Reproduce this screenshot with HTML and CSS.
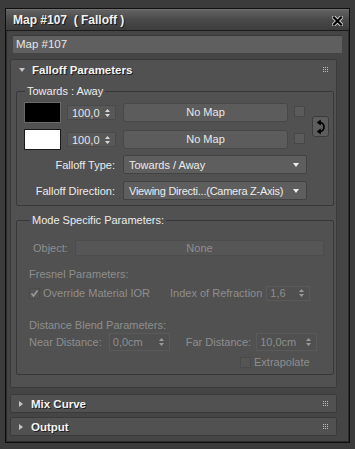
FILE: index.html
```html
<!DOCTYPE html>
<html lang="en">
<head>
    <meta charset="UTF-8">
    <meta name="viewport" content="width=device-width, initial-scale=1.0">
    <title>Map #107 ( Falloff )</title>
    <link rel="stylesheet" href="styles.css">
</head>
<body>
  <div class="window">
    <div class="titlebar">
      <span class="title">Map #107&nbsp; ( Falloff )</span>
      <svg class="close" width="11" height="10" viewBox="0 0 11 10">
        <path d="M2 1.5 L9 8.5 M9 1.5 L2 8.5" stroke="#cfcfcf" stroke-width="4" stroke-linecap="square"/>
        <path d="M2 1.5 L9 8.5 M9 1.5 L2 8.5" stroke="#000" stroke-width="2.2" stroke-linecap="square"/>
      </svg>
    </div>

    <div class="content">
      <div class="name-field">Map #107</div>

      <div class="rollouts">
        <!-- Falloff Parameters -->
        <div class="rollout">
          <div class="rollout-head">
            <span class="arrow-down"></span>
            <span class="rollout-title">Falloff Parameters</span>
            <svg class="grip" width="5" height="5" viewBox="0 0 5 5" fill="#bdbdbd">
              <rect x="0" y="0" width="1" height="1"/><rect x="2" y="0" width="1" height="1"/><rect x="4" y="0" width="1" height="1"/>
              <rect x="0" y="2" width="1" height="1"/><rect x="2" y="2" width="1" height="1"/><rect x="4" y="2" width="1" height="1"/>
              <rect x="0" y="4" width="1" height="1"/><rect x="2" y="4" width="1" height="1"/><rect x="4" y="4" width="1" height="1"/>
            </svg>
          </div>

          <div class="rollout-body">
            <fieldset class="group group-maps">
              <legend>Towards : Away</legend>

              <div class="map-block">
                <div class="map-list">
                  <div class="map-row">
                    <div class="swatch swatch-black"></div>
                    <div class="spinner spinner-pct">
                      <span>100,0</span>
                      <svg width="5" height="8" viewBox="0 0 5 8" fill="#d8d8d8"><path d="M0 3 L2.5 0 L5 3Z M0 5 L2.5 8 L5 5Z"/></svg>
                    </div>
                    <div class="map-button">No Map</div>
                    <div class="check-small"></div>
                  </div>
                  <div class="map-row">
                    <div class="swatch swatch-white"></div>
                    <div class="spinner spinner-pct">
                      <span>100,0</span>
                      <svg width="5" height="8" viewBox="0 0 5 8" fill="#d8d8d8"><path d="M0 3 L2.5 0 L5 3Z M0 5 L2.5 8 L5 5Z"/></svg>
                    </div>
                    <div class="map-button">No Map</div>
                    <div class="check-small"></div>
                  </div>
                </div>
                <div class="swap">
                  <svg width="10" height="16" viewBox="0 0 10 16" fill="none" stroke="#000" stroke-width="1.6">
                    <path d="M3 3.5 Q8 3.5 8 8 Q8 12.5 3 12.5"/>
                    <path d="M1 3.5 L4.5 1 L4.5 6Z M1 12.5 L4.5 10 L4.5 15Z" fill="#000" stroke-width="0.6"/>
                  </svg>
                </div>
              </div>

              <div class="field-row first">
                <label class="field-label">Falloff Type:</label>
                <div class="dropdown">
                  <span>Towards / Away</span>
                  <span class="drop-arrow"></span>
                </div>
              </div>
              <div class="field-row">
                <label class="field-label">Falloff Direction:</label>
                <div class="dropdown">
                  <span class="tight">Viewing Directi...(Camera Z-Axis)</span>
                  <span class="drop-arrow"></span>
                </div>
              </div>
            </fieldset>

            <fieldset class="group group-mode">
              <legend>Mode Specific Parameters:</legend>

              <div class="object-row">
                <span class="dim object-label">Object:</span>
                <div class="none-button">None</div>
              </div>

              <div class="dim sub-title fresnel">Fresnel Parameters:</div>
              <div class="ior-row">
                <div class="check-label">
                  <span class="checkbox">
                    <svg width="9" height="9" viewBox="0 0 9 9" fill="none" stroke="#9a9a9a" stroke-width="1.6"><path d="M1.5 4.5 L3.5 7 L7.5 1.5"/></svg>
                  </span>
                  <span class="dim">Override Material IOR</span>
                </div>
                <span class="dim">Index of Refraction</span>
                <div class="spinner spinner-ior dim">
                  <span>1,6</span>
                  <svg width="5" height="8" viewBox="0 0 5 8" fill="#9a9a9a"><path d="M0 3 L2.5 0 L5 3Z M0 5 L2.5 8 L5 5Z"/></svg>
                </div>
              </div>

              <div class="dim sub-title distance">Distance Blend Parameters:</div>
              <div class="distance-row">
                <span class="dim">Near Distance:</span>
                <div class="spinner spinner-dist near dim">
                  <span>0,0cm</span>
                  <svg width="5" height="8" viewBox="0 0 5 8" fill="#9a9a9a"><path d="M0 3 L2.5 0 L5 3Z M0 5 L2.5 8 L5 5Z"/></svg>
                </div>
                <span class="dim far-label">Far Distance:</span>
                <div class="spinner spinner-dist far dim">
                  <span>10,0cm</span>
                  <svg width="5" height="8" viewBox="0 0 5 8" fill="#9a9a9a"><path d="M0 3 L2.5 0 L5 3Z M0 5 L2.5 8 L5 5Z"/></svg>
                </div>
              </div>
              <div class="extrapolate-row">
                <span class="checkbox"></span>
                <span class="dim">Extrapolate</span>
              </div>
            </fieldset>
          </div>
        </div>

        <!-- collapsed rollouts -->
        <div class="rollout closed mix">
          <div class="rollout-head">
            <span class="arrow-right"></span>
            <span class="rollout-title">Mix Curve</span>
            <svg class="grip" width="5" height="5" viewBox="0 0 5 5" fill="#bdbdbd">
              <rect x="0" y="0" width="1" height="1"/><rect x="2" y="0" width="1" height="1"/><rect x="4" y="0" width="1" height="1"/>
              <rect x="0" y="2" width="1" height="1"/><rect x="2" y="2" width="1" height="1"/><rect x="4" y="2" width="1" height="1"/>
              <rect x="0" y="4" width="1" height="1"/><rect x="2" y="4" width="1" height="1"/><rect x="4" y="4" width="1" height="1"/>
            </svg>
          </div>
        </div>
        <div class="rollout closed output">
          <div class="rollout-head">
            <span class="arrow-right"></span>
            <span class="rollout-title">Output</span>
            <svg class="grip" width="5" height="5" viewBox="0 0 5 5" fill="#bdbdbd">
              <rect x="0" y="0" width="1" height="1"/><rect x="2" y="0" width="1" height="1"/><rect x="4" y="0" width="1" height="1"/>
              <rect x="0" y="2" width="1" height="1"/><rect x="2" y="2" width="1" height="1"/><rect x="4" y="2" width="1" height="1"/>
              <rect x="0" y="4" width="1" height="1"/><rect x="2" y="4" width="1" height="1"/><rect x="4" y="4" width="1" height="1"/>
            </svg>
          </div>
        </div>
      </div>
    </div>
  </div>
</body>
</html>
```

FILE: styles.css
```css
body {
    margin: 0;
    padding: 0;
    background-color: #3b3b3b;
    font-family: "Liberation Sans", Arial, sans-serif;
    font-size: 11px;
    color: #e6e6e6;
}

.window {
    box-sizing: border-box;
    width: 345px;
    height: 435px;
    margin: 8px 0 0 5px;
    border: 1px solid #0e0e0e;
    box-shadow: inset 0 0 0 1px #2c2c2c;
    background-color: #454545;
    display: flex;
    flex-direction: column;
}

/* title bar */
.titlebar {
    height: 20px;
    flex: none;
    display: flex;
    align-items: center;
    justify-content: space-between;
    padding: 0 6px 0 7px;
    background: linear-gradient(#626262, #4b4b4b 45%, #3c3c3c);
    border-top: 1px solid #707070;
    border-bottom: 1px solid #1c1c1c;
}

.title {
    font-size: 12px;
    font-weight: bold;
    color: #f2f2f2;
    text-shadow: 1px 1px 0 #1a1a1a;
}

.close {
    display: block;
    margin-top: 1px;
}

.content {
    flex: 1;
    padding-top: 4px;
}

.name-field {
    box-sizing: border-box;
    height: 18px;
    margin: 0 7px 0 7px;
    padding: 2px 3px;
    background-color: #5f5f5f;
    border-top: 1px solid #393939;
    color: #e6e6e6;
    font-size: 11.5px;
}

/* rollouts */
.rollouts {
    margin: 6px 0 0 4px;
    width: 327px;
}

.rollout {
    box-sizing: border-box;
    background-color: #515151;
    border: 1px solid #3a3a3a;
    border-radius: 2px;
}

.rollout.closed {
    height: 19px;
}

.rollout.mix {
    margin-top: 6px;
}

.rollout.output {
    margin-top: 4px;
}

.rollout-head {
    height: 19px;
    display: flex;
    align-items: center;
    padding: 0 8px 0 6px;
}

.rollout.closed .rollout-head {
    height: 17px;
}

.rollout-title {
    flex: 1;
    font-size: 11.5px;
    font-weight: bold;
    color: #f4f4f4;
    text-shadow: 1px 1px 0 #1e1e1e;
}

.arrow-down {
    width: 0;
    height: 0;
    margin: 1px 7px 0 2px;
    border-left: 3px solid transparent;
    border-right: 3px solid transparent;
    border-top: 4px solid #c4c4c4;
}

.arrow-right {
    width: 0;
    height: 0;
    margin: 0 8px 0 2px;
    border-top: 3px solid transparent;
    border-bottom: 3px solid transparent;
    border-left: 4px solid #c4c4c4;
}

.grip {
    display: block;
}

.rollout-body {
    padding: 0 2px 12px 5px;
}

/* group boxes */
.group {
    margin: 6px 0 0 0;
    border: 1px solid #383838;
    border-radius: 2px;
    min-width: 0;
}

.group legend {
    padding: 0 2px;
    margin-left: 1px;
    line-height: 13px;
    color: #ececec;
}

.group-maps {
    padding: 4px 4px 5px 7px;
}

.group-mode {
    margin-top: 8px;
    padding: 0 4px 5px 12px;
}

.map-block {
    display: flex;
    align-items: center;
}

.map-list {
    display: flex;
    flex-direction: column;
    gap: 6px;
}

.map-row {
    display: flex;
    align-items: center;
    height: 21px;
}

.swatch {
    box-sizing: border-box;
    width: 37px;
    height: 21px;
    margin-right: 6px;
}

.swatch-black {
    background-color: #000;
    border: 1px solid #6a6a6a;
}

.swatch-white {
    background-color: #fff;
    border: 1px solid #1a1a1a;
}

.spinner {
    box-sizing: border-box;
    display: flex;
    align-items: center;
    justify-content: space-between;
    background-color: #585858;
    border: 1px solid #4a4a4a;
    padding: 0 5px 0 3px;
}

.spinner svg {
    display: block;
}

.spinner-pct {
    width: 49px;
    height: 15px;
    margin-right: 7px;
    padding-left: 4px;
}

.map-button {
    box-sizing: border-box;
    width: 165px;
    height: 19px;
    line-height: 17px;
    text-align: center;
    background-color: #5c5c5c;
    border: 1px solid #484848;
    border-radius: 3px;
    color: #e8e8e8;
}

.check-small {
    box-sizing: border-box;
    width: 11px;
    height: 11px;
    margin-left: 6px;
    background-color: #5b5b5b;
    border: 1px solid #474747;
    align-self: flex-start;
    margin-top: 4px;
}

.swap {
    box-sizing: border-box;
    width: 17px;
    height: 21px;
    margin-left: 7px;
    margin-top: 1px;
    display: flex;
    align-items: center;
    justify-content: center;
    background-color: #5d5d5d;
    border: 1px solid #3c3c3c;
    border-radius: 3px;
}

.swap svg {
    display: block;
}

.field-row {
    display: flex;
    align-items: center;
    height: 19px;
    margin-top: 7px;
}

.field-row.first {
    margin-top: 5px;
}

.field-label {
    width: 91px;
    margin-right: 8px;
    text-align: right;
    color: #ececec;
}

.dropdown {
    box-sizing: border-box;
    width: 184px;
    height: 19px;
    display: flex;
    align-items: center;
    justify-content: space-between;
    padding: 0 7px 0 5px;
    background-color: #5e5e5e;
    border: 1px solid #424242;
    border-radius: 2px;
    color: #ececec;
}

.dropdown .tight {
    letter-spacing: -0.25px;
}

.drop-arrow {
    width: 0;
    height: 0;
    border-left: 3px solid transparent;
    border-right: 3px solid transparent;
    border-top: 4px solid #eeeeee;
}

/* disabled section */
.dim {
    color: #8e8e8e;
}

.object-row {
    display: flex;
    align-items: center;
    height: 16px;
    margin-top: 13px;
    padding-left: 4px;
}

.object-label {
    width: 42px;
}

.none-button {
    box-sizing: border-box;
    width: 249px;
    height: 16px;
    line-height: 14px;
    text-align: center;
    background-color: #565656;
    border: 1px solid #4c4c4c;
    border-radius: 2px;
    color: #8e8e8e;
}

.sub-title {
    line-height: 14px;
}

.sub-title.fresnel {
    margin-top: 11px;
}

.sub-title.distance {
    margin-top: 18px;
}

.ior-row {
    display: flex;
    align-items: center;
    height: 14px;
    margin-top: 5px;
}

.check-label {
    width: 141px;
    display: flex;
    align-items: center;
}

.checkbox {
    box-sizing: border-box;
    width: 11px;
    height: 11px;
    margin-right: 3px;
    display: flex;
    align-items: center;
    justify-content: center;
    background-color: #555555;
    border: 1px solid #4a4a4a;
}

.checkbox svg {
    display: block;
}

.spinner-ior {
    width: 44px;
    height: 15px;
    margin-left: 4px;
    background-color: #505050;
    border-color: #5a5a5a;
}

.distance-row {
    display: flex;
    align-items: center;
    height: 18px;
    margin-top: 1px;
}

.spinner-dist {
    width: 61px;
    height: 18px;
    background-color: #505050;
    border-color: #5a5a5a;
}

.spinner-dist.near {
    margin-left: 7px;
}

.far-label {
    margin-left: 16px;
}

.spinner-dist.far {
    margin-left: 5px;
}

.extrapolate-row {
    display: flex;
    align-items: center;
    height: 14px;
    margin-top: 4px;
    padding-left: 211px;
}
```
